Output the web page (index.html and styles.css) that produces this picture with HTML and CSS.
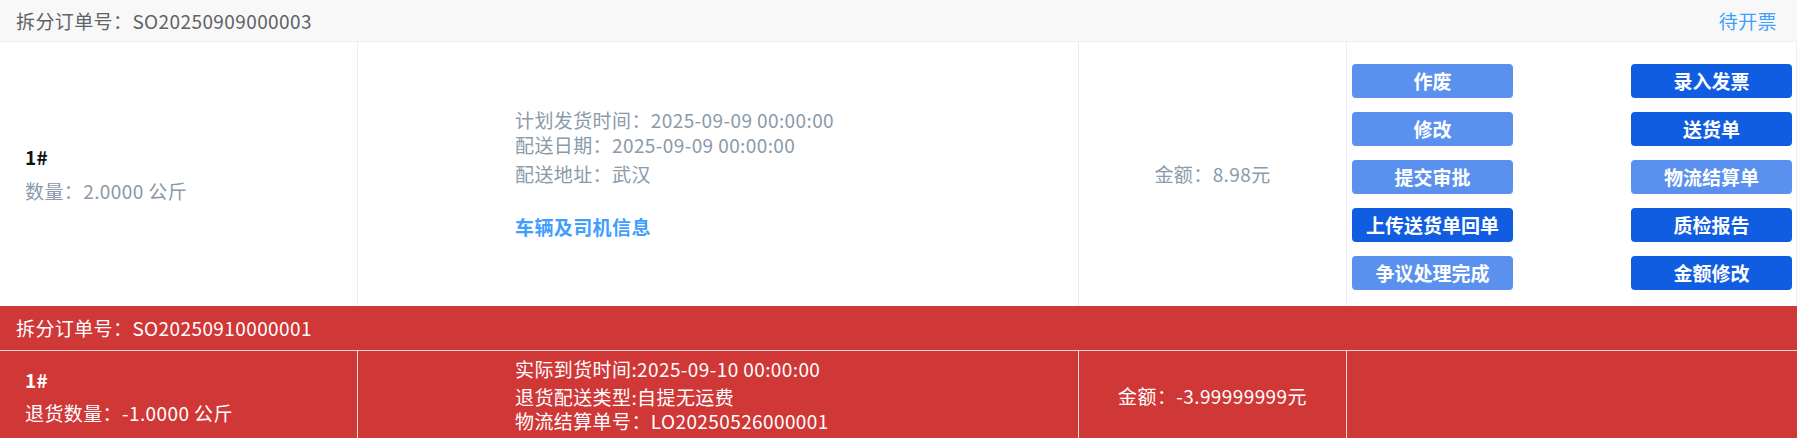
FILE: index.html
```html
<!DOCTYPE html>
<html lang="zh-CN">
<head>
<meta charset="utf-8">
<title>拆分订单</title>
<link rel="stylesheet" href="styles.css">
</head>
<body>
<div class="table">
  <section class="order">
    <div class="order-head">
      <span class="order-no">拆分订单号：SO20250909000003</span>
      <span class="status">待开票</span>
    </div>
    <div class="order-row">
      <div class="cell c-item">
        <div class="item-no">1#</div>
        <div class="muted">数量：2.0000 公斤</div>
      </div>
      <div class="cell c-info">
        <div class="line muted">计划发货时间：2025-09-09 00:00:00</div>
        <div class="line muted">配送日期：2025-09-09 00:00:00</div>
        <div class="line muted gap4">配送地址：武汉</div>
        <div class="line link">车辆及司机信息</div>
      </div>
      <div class="cell c-amount muted">金额：8.98元</div>
      <div class="cell c-actions">
        <button class="btn light">作废</button>
        <button class="btn dark">录入发票</button>
        <button class="btn light">修改</button>
        <button class="btn dark">送货单</button>
        <button class="btn light">提交审批</button>
        <button class="btn light">物流结算单</button>
        <button class="btn dark">上传送货单回单</button>
        <button class="btn dark">质检报告</button>
        <button class="btn light">争议处理完成</button>
        <button class="btn dark">金额修改</button>
      </div>
    </div>
  </section>

  <section class="order returned">
    <div class="order-head">
      <span class="order-no">拆分订单号：SO20250910000001</span>
    </div>
    <div class="order-row">
      <div class="cell c-item">
        <div class="item-no">1#</div>
        <div>退货数量：-1.0000 公斤</div>
      </div>
      <div class="cell c-info">
        <div class="rline">实际到货时间:2025-09-10 00:00:00</div>
        <div class="rline gap4">退货配送类型:自提无运费</div>
        <div class="rline">物流结算单号：LO20250526000001</div>
      </div>
      <div class="cell c-amount">金额：-3.99999999元</div>
      <div class="cell c-actions"></div>
    </div>
  </section>
</div>
</body>
</html>
```

FILE: styles.css
```css
* { box-sizing: border-box; }

html, body {
  margin: 0;
  padding: 0;
  background: #ffffff;
}

body {
  font-family: "Noto Sans CJK SC", "Noto Sans", sans-serif;
  font-size: 19px;
  letter-spacing: 0.4px;
  color: #606266;
}

.table {
  width: 1797px;
}

.order-head {
  height: 42px;
  display: flex;
  align-items: center;
  justify-content: space-between;
  padding: 0 20px 0 16px;
  background: #f8f8f8;
  border-bottom: 1px solid #ebeef5;
}

.order-no {
  color: #5f6266;
  line-height: 24px;
}

.status {
  color: #409eff;
  line-height: 24px;
}

.order-row {
  display: grid;
  grid-template-columns: 357px 721px 268px 451px;
  border-right: 1px solid #ebeef5;
}

.cell {
  display: flex;
  flex-direction: column;
  justify-content: center;
}

.cell + .cell {
  border-left: 1px solid #ebeef5;
}

.muted { color: #8a9aaa; }

.c-item {
  padding-left: 25px;
}

.item-no {
  color: #111111;
  font-weight: 700;
  line-height: 24px;
  margin-bottom: 10px;
}

.c-item > div:last-child {
  line-height: 24px;
}

.c-info {
  padding-left: 157px;
  padding-bottom: 3px;
}

.line {
  line-height: 25px;
  white-space: nowrap;
}

.gap4 { margin-top: 4px; }

.link {
  color: #409eff;
  font-weight: 700;
  margin-top: 28px;
}

.c-amount {
  align-items: center;
  line-height: 24px;
}

.c-actions {
  display: grid;
  grid-template-columns: 161px 161px;
  justify-content: space-between;
  align-content: start;
  row-gap: 14px;
  padding: 22px 5px 16px 5px;
}

.btn {
  height: 34px;
  border: none;
  border-radius: 4px;
  color: #ffffff;
  font-family: inherit;
  font-size: 19px;
  font-weight: 700;
  letter-spacing: 0;
  padding: 0;
  line-height: 34px;
}

.btn.light { background: #5b91ee; }
.btn.dark { background: #105de1; }

/* returned order (red) */
.returned .order-head {
  height: 45px;
  background: #d03737;
  border-bottom: 1px solid #f3d6d6;
}

.returned .order-no { color: #ffffff; }

.returned .order-row {
  background: #d03737;
  color: #ffffff;
  height: 90px;
  border-right: 1px solid #d03737;
}

.returned .cell + .cell {
  border-left: 1px solid #f6dada;
}

.returned .item-no {
  color: #ffffff;
  margin-bottom: 9px;
}

.returned .c-info {
  padding-top: 0;
  padding-bottom: 3px;
}

.rline {
  line-height: 24px;
  white-space: nowrap;
}
```
